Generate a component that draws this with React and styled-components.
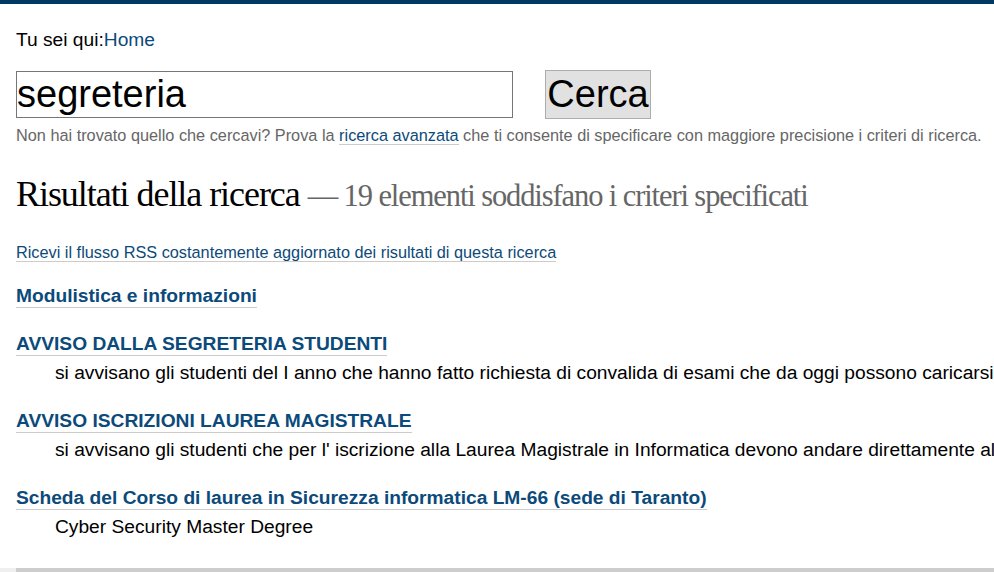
import React from "react";
import styled, { createGlobalStyle } from "styled-components";

const Global = createGlobalStyle`
  html, body { margin: 0; padding: 0; background: #fff; }
  body {
    font-family: "Liberation Sans", Arial, sans-serif;
    color: #000;
    overflow-x: hidden;
  }
`;

const TopBar = styled.div`
  height: 4px;
  background: #003a63;
`;

const Main = styled.main`
  padding: 0 16px;
`;

const Breadcrumb = styled.div`
  margin-top: 25px;
  font-size: 19.2px;
  line-height: 22px;
`;

const Link = styled.a`
  color: #0b4a7a;
  text-decoration: none;
`;

const SearchForm = styled.form`
  display: flex;
  align-items: center;
  margin-top: 19px;
  height: 49px;
`;

const SearchInput = styled.input`
  box-sizing: border-box;
  width: 497px;
  height: 47px;
  border: 1px solid #767676;
  padding: 0;
  margin: 0;
  font-family: "Liberation Sans", Arial, sans-serif;
  font-size: 38px;
  color: #000;
  outline: none;
`;

const SearchButton = styled.button`
  box-sizing: border-box;
  margin-left: 32px;
  width: 106px;
  height: 49px;
  padding: 0;
  background: #e1e1e1;
  border: 1px solid #adadad;
  font-family: "Liberation Sans", Arial, sans-serif;
  font-size: 38px;
  color: #000;
`;

const Help = styled.p`
  margin: 7px 0 0;
  font-size: 16.3px;
  line-height: 19px;
  color: #666;
  white-space: nowrap;
`;

const Underlined = styled.a`
  color: #0b4a7a;
  text-decoration: none;
  border-bottom: 1px solid #ccc;
`;

const Title = styled.h1`
  margin: 28px 0 0;
  font-family: "Liberation Serif", "Times New Roman", serif;
  font-weight: normal;
  font-size: 36px;
  line-height: 43px;
  letter-spacing: -1.05px;
  white-space: nowrap;
`;

const Discreet = styled.span`
  color: #666;
  font-size: 30.5px;
  letter-spacing: -1.1px;
`;

const Rss = styled.p`
  margin: 25px 0 0;
  font-size: 16.3px;
  line-height: 19px;
`;

const Results = styled.dl`
  margin: 22px 0 0;
  padding: 0;
`;

const ResultTitle = styled.dt`
  font-size: 19.2px;
  font-weight: bold;
  line-height: 23px;
`;

const ResultLink = styled.a`
  display: inline-block;
  color: #0b4a7a;
  text-decoration: none;
  border-bottom: 1px solid #ccc;
`;

const ResultDesc = styled.dd`
  margin: 5px 0 0 39px;
  font-size: 19.2px;
  line-height: 24px;
  white-space: nowrap;
`;

const Entry = styled.div`
  margin-bottom: 24px;
`;

const Footer = styled.footer`
  margin-top: 29px;
  background: #efefef;
  padding-left: 16px;
`;

const FooterBar = styled.div`
  height: 40px;
  border-top: 4px solid #cdcdcd;
`;

const results = [
  { title: "Modulistica e informazioni" },
  {
    title: "AVVISO DALLA SEGRETERIA STUDENTI",
    desc: "si avvisano gli studenti del I anno che hanno fatto richiesta di convalida di esami che da oggi possono caricarsi",
  },
  {
    title: "AVVISO ISCRIZIONI LAUREA MAGISTRALE",
    desc: "si avvisano gli studenti che per l' iscrizione alla Laurea Magistrale in Informatica devono andare direttamente al",
  },
  {
    title: "Scheda del Corso di laurea in Sicurezza informatica LM-66 (sede di Taranto)",
    desc: "Cyber Security Master Degree",
  },
];

export default function App() {
  return (
    <>
      <Global />
      <TopBar />
      <Main>
        <Breadcrumb>
          Tu sei qui:<Link href="#">Home</Link>
        </Breadcrumb>
        <SearchForm onSubmit={(e) => e.preventDefault()}>
          <SearchInput defaultValue="segreteria" />
          <SearchButton type="submit">Cerca</SearchButton>
        </SearchForm>
        <Help>
          Non hai trovato quello che cercavi? Prova la{" "}
          <Underlined href="#">ricerca avanzata</Underlined> che ti consente di
          specificare con maggiore precisione i criteri di ricerca.
        </Help>
        <Title>
          Risultati della ricerca{" "}
          <Discreet>— 19 elementi soddisfano i criteri specificati</Discreet>
        </Title>
        <Rss>
          <Underlined href="#">
            Ricevi il flusso RSS costantemente aggiornato dei risultati di questa
            ricerca
          </Underlined>
        </Rss>
        <Results>
          {results.map((r) => (
            <Entry key={r.title}>
              <ResultTitle>
                <ResultLink href="#">{r.title}</ResultLink>
              </ResultTitle>
              {r.desc && <ResultDesc>{r.desc}</ResultDesc>}
            </Entry>
          ))}
        </Results>
      </Main>
      <Footer>
        <FooterBar />
      </Footer>
    </>
  );
}
